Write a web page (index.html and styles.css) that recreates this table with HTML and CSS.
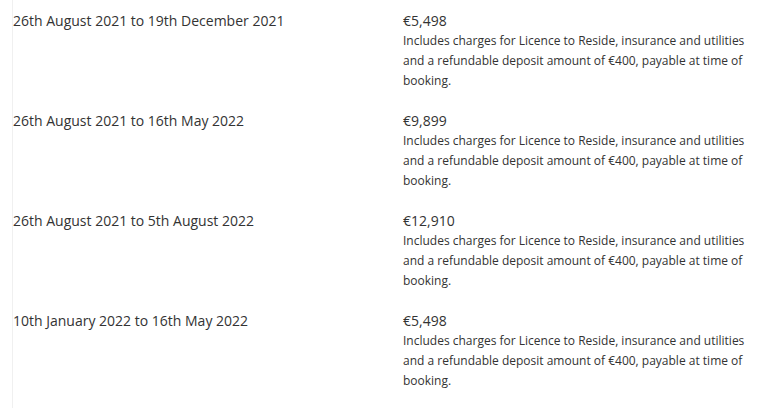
FILE: index.html
```html
<!DOCTYPE html>
<html>
<head>
<meta charset="utf-8">
<link rel="stylesheet" href="styles.css">
</head>
<body>
<div class="list">
  <div class="row">
    <div class="dates">26th August 2021 to 19th December 2021</div>
    <div class="info">
      <div class="price">€5,498</div>
      <div class="desc">Includes charges for Licence to Reside, insurance and utilities and a refundable deposit amount of €400, payable at time of booking.</div>
    </div>
  </div>
  <div class="row">
    <div class="dates">26th August 2021 to 16th May 2022</div>
    <div class="info">
      <div class="price">€9,899</div>
      <div class="desc">Includes charges for Licence to Reside, insurance and utilities and a refundable deposit amount of €400, payable at time of booking.</div>
    </div>
  </div>
  <div class="row">
    <div class="dates">26th August 2021 to 5th August 2022</div>
    <div class="info">
      <div class="price">€12,910</div>
      <div class="desc">Includes charges for Licence to Reside, insurance and utilities and a refundable deposit amount of €400, payable at time of booking.</div>
    </div>
  </div>
  <div class="row">
    <div class="dates">10th January 2022 to 16th May 2022</div>
    <div class="info">
      <div class="price">€5,498</div>
      <div class="desc">Includes charges for Licence to Reside, insurance and utilities and a refundable deposit amount of €400, payable at time of booking.</div>
    </div>
  </div>
</div>
</body>
</html>
```
FILE: styles.css
```css
html, body {
  margin: 0;
  padding: 0;
  background: #fff;
}
body {
  font-family: "Open Sans", sans-serif;
  color: #333;
  padding-left: 12px;
}
.list {
  border-left: 1px solid #f0f0f0;
  padding-top: 10px;
  min-height: 398px;
}
.row {
  display: grid;
  grid-template-columns: 390px 1fr;
  height: 100px;
}
.dates {
  font-size: 14px;
  line-height: 21px;
}
.info {
  width: 350px;
}
.price {
  font-size: 14px;
  line-height: 21px;
}
.desc {
  font-size: 12px;
  line-height: 20px;
}
```
